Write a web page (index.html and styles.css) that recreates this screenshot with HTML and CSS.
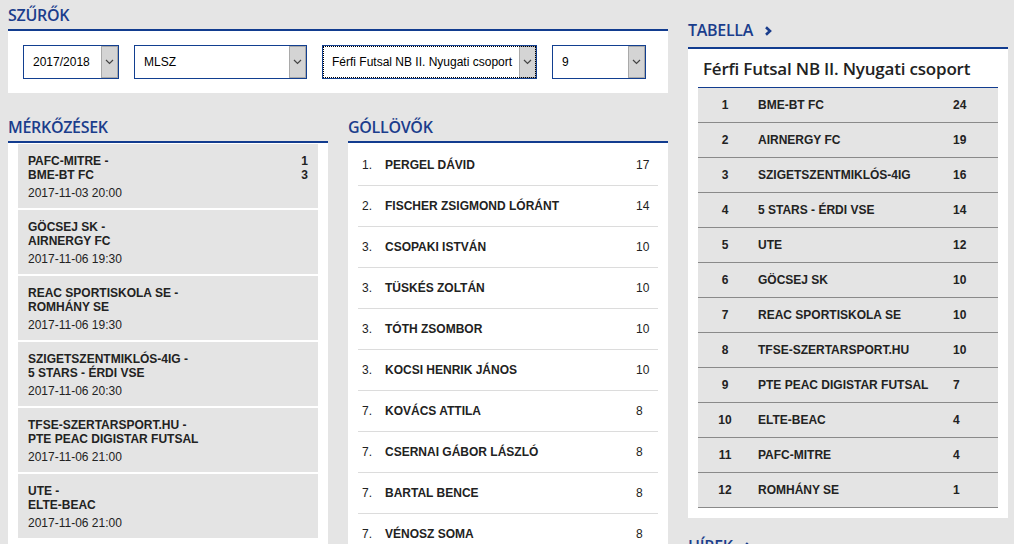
FILE: index.html
```html
<!DOCTYPE html>
<html lang="hu">
<head>
<meta charset="utf-8">
<title>Férfi Futsal NB II. Nyugati csoport</title>
<link rel="stylesheet" href="styles.css">
</head>
<body>
<div class="page">
  <div class="main">
    <section class="filters">
      <h2 class="heading">SZŰRŐK</h2>
      <div class="panel filter-panel">
        <label class="select select--season">
          <select class="select__input"><option>2017/2018</option></select>
          <span class="select__arrow"><svg width="9" height="6" viewBox="0 0 9 6"><polyline points="1,1 4.5,4.5 8,1" fill="none" stroke="#444" stroke-width="1.2"/></svg></span>
        </label>
        <label class="select select--org">
          <select class="select__input"><option>MLSZ</option></select>
          <span class="select__arrow"><svg width="9" height="6" viewBox="0 0 9 6"><polyline points="1,1 4.5,4.5 8,1" fill="none" stroke="#444" stroke-width="1.2"/></svg></span>
        </label>
        <label class="select select--league select--focus">
          <select class="select__input"><option>Férfi Futsal NB II. Nyugati csoport</option></select>
          <span class="select__arrow"><svg width="9" height="6" viewBox="0 0 9 6"><polyline points="1,1 4.5,4.5 8,1" fill="none" stroke="#444" stroke-width="1.2"/></svg></span>
        </label>
        <label class="select select--round">
          <select class="select__input"><option>9</option></select>
          <span class="select__arrow"><svg width="9" height="6" viewBox="0 0 9 6"><polyline points="1,1 4.5,4.5 8,1" fill="none" stroke="#444" stroke-width="1.2"/></svg></span>
        </label>
      </div>
    </section>

    <div class="cols">
      <section class="col">
        <h2 class="heading">MÉRKŐZÉSEK</h2>
        <div class="panel matches">
          <div class="match">
            <div class="match__teams">PAFC-MITRE -<br>BME-BT FC</div>
            <div class="match__score">1<br>3</div>
            <div class="match__date">2017-11-03 20:00</div>
          </div>
          <div class="match">
            <div class="match__teams">GÖCSEJ SK -<br>AIRNERGY FC</div>
            <div class="match__score"></div>
            <div class="match__date">2017-11-06 19:30</div>
          </div>
          <div class="match">
            <div class="match__teams">REAC SPORTISKOLA SE -<br>ROMHÁNY SE</div>
            <div class="match__score"></div>
            <div class="match__date">2017-11-06 19:30</div>
          </div>
          <div class="match">
            <div class="match__teams">SZIGETSZENTMIKLÓS-4IG -<br>5 STARS - ÉRDI VSE</div>
            <div class="match__score"></div>
            <div class="match__date">2017-11-06 20:30</div>
          </div>
          <div class="match">
            <div class="match__teams">TFSE-SZERTARSPORT.HU -<br>PTE PEAC DIGISTAR FUTSAL</div>
            <div class="match__score"></div>
            <div class="match__date">2017-11-06 21:00</div>
          </div>
          <div class="match">
            <div class="match__teams">UTE -<br>ELTE-BEAC</div>
            <div class="match__score"></div>
            <div class="match__date">2017-11-06 21:00</div>
          </div>
        </div>
      </section>

      <section class="col">
        <h2 class="heading">GÓLLÖVŐK</h2>
        <div class="panel scorers">
          <div class="scorer"><span>1.</span><span class="scorer__name">PERGEL DÁVID</span><span>17</span></div>
          <div class="scorer"><span>2.</span><span class="scorer__name">FISCHER ZSIGMOND LÓRÁNT</span><span>14</span></div>
          <div class="scorer"><span>3.</span><span class="scorer__name">CSOPAKI ISTVÁN</span><span>10</span></div>
          <div class="scorer"><span>3.</span><span class="scorer__name">TÜSKÉS ZOLTÁN</span><span>10</span></div>
          <div class="scorer"><span>3.</span><span class="scorer__name">TÓTH ZSOMBOR</span><span>10</span></div>
          <div class="scorer"><span>3.</span><span class="scorer__name">KOCSI HENRIK JÁNOS</span><span>10</span></div>
          <div class="scorer"><span>7.</span><span class="scorer__name">KOVÁCS ATTILA</span><span>8</span></div>
          <div class="scorer"><span>7.</span><span class="scorer__name">CSERNAI GÁBOR LÁSZLÓ</span><span>8</span></div>
          <div class="scorer"><span>7.</span><span class="scorer__name">BARTAL BENCE</span><span>8</span></div>
          <div class="scorer"><span>7.</span><span class="scorer__name">VÉNOSZ SOMA</span><span>8</span></div>
        </div>
      </section>
    </div>
  </div>

  <aside class="side">
    <section>
      <h2 class="heading heading--link">TABELLA<svg class="chevron" width="10" height="10" viewBox="0 0 10 10"><polyline points="3,1.2 7,5 3,8.8" fill="none" stroke="#1b3d8c" stroke-width="2.6"/></svg></h2>
      <div class="panel standings">
        <div class="standings__title">Férfi Futsal NB II. Nyugati csoport</div>
        <div class="standing"><span class="standing__rank">1</span><span>BME-BT FC</span><span>24</span></div>
        <div class="standing"><span class="standing__rank">2</span><span>AIRNERGY FC</span><span>19</span></div>
        <div class="standing"><span class="standing__rank">3</span><span>SZIGETSZENTMIKLÓS-4IG</span><span>16</span></div>
        <div class="standing"><span class="standing__rank">4</span><span>5 STARS - ÉRDI VSE</span><span>14</span></div>
        <div class="standing"><span class="standing__rank">5</span><span>UTE</span><span>12</span></div>
        <div class="standing"><span class="standing__rank">6</span><span>GÖCSEJ SK</span><span>10</span></div>
        <div class="standing"><span class="standing__rank">7</span><span>REAC SPORTISKOLA SE</span><span>10</span></div>
        <div class="standing"><span class="standing__rank">8</span><span>TFSE-SZERTARSPORT.HU</span><span>10</span></div>
        <div class="standing"><span class="standing__rank">9</span><span>PTE PEAC DIGISTAR FUTSAL</span><span>7</span></div>
        <div class="standing"><span class="standing__rank">10</span><span>ELTE-BEAC</span><span>4</span></div>
        <div class="standing"><span class="standing__rank">11</span><span>PAFC-MITRE</span><span>4</span></div>
        <div class="standing"><span class="standing__rank">12</span><span>ROMHÁNY SE</span><span>1</span></div>
      </div>
    </section>
    <section class="news">
      <h2 class="heading heading--link">HÍREK<svg class="chevron" width="10" height="10" viewBox="0 0 10 10"><polyline points="3,1.2 7,5 3,8.8" fill="none" stroke="#1b3d8c" stroke-width="2.6"/></svg></h2>
    </section>
  </aside>
</div>
</body>
</html>
```

FILE: styles.css
```css
html, body {
  margin: 0;
  height: 100%;
  overflow: hidden;
}

body {
  background: #e5e5e5;
  color: #222;
  font-family: "Liberation Sans", Arial, sans-serif;
  font-size: 12px;
}

.page {
  display: flex;
  gap: 20px;
  padding: 0 6px 0 8px;
}

.main {
  width: 660px;
}

.side {
  width: 320px;
  padding-top: 15px;
}

/* Section headings with the blue rule underneath */
.heading {
  margin: 0;
  padding: 5px 0 4px;
  font: 600 16px/20px "Open Sans", sans-serif;
  letter-spacing: -0.3px;
  color: #1b3d8c;
  border-bottom: 2px solid #123c8f;
}

.heading--link {
  display: flex;
  align-items: center;
  padding-bottom: 7px;
}

.chevron {
  margin-left: 10px;
  margin-top: 1px;
}

.panel {
  background: #fff;
}

/* Filters */
.filter-panel {
  display: flex;
  gap: 15px;
  padding: 14px 15px 14px;
}

.select {
  display: flex;
  height: 34px;
  box-sizing: border-box;
  border: 1px solid #123f90;
  background: #fff;
}

.select--season { width: 96px; }
.select--org { width: 173px; }
.select--league { width: 215px; }
.select--round { width: 94px; }

.select--focus {
  outline: 1px dotted #000;
  outline-offset: -2px;
}

.select__input {
  appearance: none;
  -webkit-appearance: none;
  flex: 1;
  min-width: 0;
  width: 100%;
  border: 0;
  margin: 0;
  padding: 0 0 0 9px;
  background: transparent;
  color: #000;
  font: 12px "Liberation Sans", Arial, sans-serif;
  outline: none;
}

.select__arrow {
  width: 17px;
  box-sizing: border-box;
  background: #d4d4d4;
  border: 1px solid #a9a9a9;
  display: flex;
  align-items: center;
  justify-content: center;
}

/* Two columns under the filters */
.cols {
  display: flex;
  gap: 20px;
  margin-top: 19px;
}

.col {
  width: 320px;
}

/* Matches */
.matches {
  padding: 1px 10px 6px;
}

.match {
  display: grid;
  grid-template-columns: 1fr auto;
  background: #e4e4e4;
  padding: 10px 10px 8px;
  margin-bottom: 2px;
}

.match__teams,
.match__score {
  font-weight: bold;
  line-height: 14px;
}

.match__score {
  text-align: right;
}

.match__date {
  grid-column: 1 / -1;
  margin-top: 4px;
  line-height: 14px;
}

/* Goal scorers */
.scorers {
  padding: 2px 10px 0;
}

.scorer {
  display: grid;
  grid-template-columns: 23px 1fr 22px;
  align-items: center;
  height: 40px;
  padding-left: 4px;
  border-bottom: 1px solid #dcdcdc;
}

.scorer__name {
  font-weight: bold;
}

/* League table */
.standings {
  padding: 0 10px 10px;
}

.standings__title {
  padding: 10px 5px 8px;
  font: 600 17px/20px "Open Sans", sans-serif;
  letter-spacing: -0.2px;
  color: #222;
  border-bottom: 1px solid #123c8f;
}

.standing {
  display: grid;
  grid-template-columns: 54px 189px 1fr;
  column-gap: 6px;
  align-items: center;
  height: 34px;
  background: #e4e4e4;
  border-bottom: 1px solid #8a8a8a;
  font-weight: bold;
}

.standing__rank {
  text-align: center;
}

.news {
  margin-top: 13px;
}
```
